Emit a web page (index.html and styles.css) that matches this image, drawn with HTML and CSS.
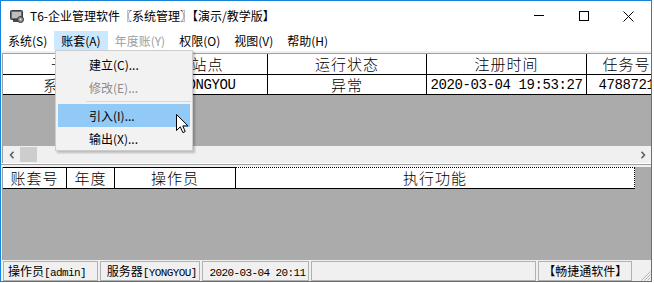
FILE: index.html
```html
<!DOCTYPE html>
<html lang="zh-CN">
<head>
<meta charset="utf-8">
<title>T6-企业管理软件</title>
<link rel="stylesheet" href="styles.css">
</head>
<body>
<div class="window">
  <div class="titlebar">
    <svg class="app-icon" width="14" height="13" viewBox="0 0 14 13">
      <rect x="0.5" y="0.5" width="12" height="9" rx="1" fill="#6b6b6b" stroke="#3a3a3a"/>
      <rect x="2" y="2" width="9" height="6" fill="#bdbdbd"/>
      <rect x="3" y="10" width="6" height="2" fill="#4a4a4a"/>
      <circle cx="10.5" cy="9.5" r="3" fill="#8c8c8c" stroke="#333"/>
      <circle cx="10.5" cy="9.5" r="1" fill="#e6e6e6"/>
    </svg>
    <span class="title">T6-企业管理软件〖系统管理〗【演示/教学版】</span>
    <div class="controls">
      <span class="ctl"><svg width="10" height="10" viewBox="0 0 10 10"><path d="M0 4.5H10" stroke="#000" stroke-width="1"/></svg></span>
      <span class="ctl"><svg width="10" height="10" viewBox="0 0 10 10"><rect x="0.5" y="0.5" width="9" height="9" fill="none" stroke="#000"/></svg></span>
      <span class="ctl"><svg width="11" height="11" viewBox="0 0 11 11"><path d="M0.5 0.5L10.5 10.5M10.5 0.5L0.5 10.5" stroke="#000" stroke-width="1"/></svg></span>
    </div>
  </div>
  <div class="menubar">
    <span class="mi">系统(S)</span>
    <span class="mi active">账套(A)</span>
    <span class="mi disabled">年度账(Y)</span>
    <span class="mi">权限(O)</span>
    <span class="mi">视图(V)</span>
    <span class="mi">帮助(H)</span>
  </div>
  <div class="client">
    <div class="pane pane-top">
      <div class="grid g1">
        <div class="cell">子系统</div>
        <div class="cell">站点</div>
        <div class="cell">运行状态</div>
        <div class="cell">注册时间</div>
        <div class="cell">任务号</div>
        <div class="cell"></div>
        <div class="cell row2">系统管理</div>
        <div class="cell row2"><span class="mono">YONGYOU</span></div>
        <div class="cell row2">异常</div>
        <div class="cell row2"><span class="mono">2020-03-04 19:53:27</span></div>
        <div class="cell row2"><span class="mono">4788721</span></div>
        <div class="cell row2"></div>
      </div>
      <div class="fill"></div>
      <div class="hscroll">
        <span class="sb-btn"><svg width="6" height="8" viewBox="0 0 6 8"><path d="M4.5 0.8L1.5 4L4.5 7.2" fill="none" stroke="#606060" stroke-width="1.6"/></svg></span>
        <span class="thumb"></span>
        <span class="track"></span>
        <span class="sb-btn"><svg width="6" height="8" viewBox="0 0 6 8"><path d="M1.5 0.8L4.5 4L1.5 7.2" fill="none" stroke="#606060" stroke-width="1.6"/></svg></span>
      </div>
    </div>
    <div class="splitter"></div>
    <div class="pane pane-bottom">
      <div class="grid g2">
        <div class="cell">账套号</div>
        <div class="cell">年度</div>
        <div class="cell">操作员</div>
        <div class="cell focus">执行功能</div>
      </div>
      <div class="fill"></div>
    </div>
    <div class="statusbar">
      <span class="panel p1">操作员<span class="mono-s">[admin]</span></span>
      <span class="panel p2">服务器<span class="mono-s">[YONGYOU]</span></span>
      <span class="panel p3"><span class="mono-s">2020-03-04 20:11</span></span>
      <span class="panel p4"></span>
      <span class="panel p5">【畅捷通软件】</span>
      <svg class="grip" width="11" height="11" viewBox="0 0 11 11">
        <path d="M10.5 1.5L1.5 10.5M10.5 4.5L4.5 10.5M10.5 7.5L7.5 10.5" stroke="#b4b4b4" stroke-width="1"/>
      </svg>
    </div>
  </div>

  <div class="dropdown">
    <div class="item">建立(C)...</div>
    <div class="item disabled">修改(E)...</div>
    <div class="sep"></div>
    <div class="item hover">引入(I)...</div>
    <div class="item">输出(X)...</div>
  </div>
  <svg class="cursor" width="13" height="20" viewBox="0 0 13 20">
    <path d="M0.5 0.5L0.5 16.5L4.3 12.8L6.8 18.6L9.2 17.6L6.8 11.9L12 11.9Z" fill="#fff" stroke="#000" stroke-width="1" stroke-linejoin="miter"/>
  </svg>
</div>
</body>
</html>
```

FILE: styles.css
```css
* {
  box-sizing: border-box;
  margin: 0;
  padding: 0;
}

html, body {
  margin: 0;
  background: #ffffff;
  width: 654px;
  height: 283px;
  overflow: hidden;
  font-family: "Noto Sans CJK SC", "Noto Sans", sans-serif;
  color: #000;
}

.window {
  position: relative;
  width: 652px;
  height: 282px;
  border: 1px solid #1883d7;
  background: #ffffff;
  overflow: hidden;
}

/* ---------- title bar ---------- */
.titlebar {
  height: 30px;
  display: flex;
  align-items: center;
}

.app-icon {
  flex: none;
  margin-left: 9px;
}

.title {
  margin-left: 6px;
  font-size: 12px;
  line-height: 16px;
  white-space: nowrap;
}

.controls {
  margin-left: auto;
  display: flex;
  height: 30px;
}

.ctl {
  width: 45px;
  height: 30px;
  display: flex;
  align-items: center;
  justify-content: center;
}

/* ---------- menu bar ---------- */
.menubar {
  height: 20px;
  display: flex;
  align-items: flex-start;
}

.mi {
  height: 19px;
  line-height: 19px;
  padding: 0 7px;
  font-size: 12px;
  white-space: nowrap;
}

.mi.active {
  background: #cce8ff;
}

.mi.disabled {
  color: #a0a0a0;
}

/* ---------- client area ---------- */
.client {
  height: 230px;
  background: #f0f0f0;
  padding-top: 2px;
  display: flex;
  flex-direction: column;
}

.pane {
  margin-left: 1px;
  background: #ababab;
  border-left: 1px solid #a0a0a0;
  display: flex;
  flex-direction: column;
  overflow: hidden;
}

.pane-top {
  height: 110px;
  border-top: 1px solid #a0a0a0;
}

.pane-bottom {
  height: 93px;
  margin-top: 2px;
}

.fill {
  flex: 1;
  background: #ababab;
}

.grid {
  display: grid;
  width: max-content;
  flex: none;
  font-size: 15px;
  font-weight: 300;
  letter-spacing: 1px;
}

.g1 {
  grid-template-columns: 145px 120px 159px 160px 80px 200px;
}

.g2 {
  grid-template-columns: 64px 48px 121px 399px;
}

.cell {
  height: 21px;
  background: #ffffff;
  border-right: 1px solid #000;
  border-bottom: 1px solid #000;
  display: flex;
  align-items: center;
  justify-content: center;
  white-space: nowrap;
  overflow: hidden;
  line-height: 20px;
}

.g1 .row2 {
  height: 20px;
}

.g2 .cell {
  height: 22px;
  border-top: 1px solid #000;
}

.g2 .focus {
  border-top: 1px dotted #000;
  border-right: 1px dotted #000;
}

.mono {
  font-family: "Liberation Mono", "DejaVu Sans Mono", monospace;
  font-size: 14px;
  letter-spacing: -0.4px;
  font-weight: normal;
}

.hscroll {
  height: 17px;
  flex: none;
  display: flex;
  background: #f0f0f0;
}

.sb-btn {
  width: 17px;
  height: 17px;
  display: flex;
  align-items: center;
  justify-content: center;
  flex: none;
}

.thumb {
  width: 17px;
  height: 15px;
  margin-top: 1px;
  background: #cdcdcd;
  flex: none;
}

.track {
  flex: 1;
}

.splitter {
  height: 2px;
  flex: none;
  border-top: 1px solid #ffffff;
  border-bottom: 1px solid #a0a0a0;
}

/* ---------- status bar ---------- */
.statusbar {
  height: 20px;
  margin-top: 1px;
  padding-left: 2px;
  display: flex;
  gap: 2px;
  flex: none;
}

.panel {
  height: 20px;
  border: 1px solid #b0b0b0;
  font-size: 12px;
  line-height: 18px;
  white-space: nowrap;
  overflow: hidden;
  padding-left: 6px;
}

.p1 { width: 95px; padding-left: 4px; }
.p2 { width: 101px; }
.p3 { width: 107px; }
.p4 { width: 226px; }
.p5 { width: 94px; padding-left: 0; text-align: center; }

.mono-s {
  font-family: "Liberation Mono", "DejaVu Sans Mono", monospace;
  font-size: 11px;
  letter-spacing: -0.6px;
}

.grip {
  margin-left: 6px;
  align-self: flex-end;
}

/* ---------- dropdown menu ---------- */
.dropdown {
  position: absolute;
  left: 54px;
  top: 49px;
  width: 138px;
  background: #f2f2f2;
  border: 1px solid #cccccc;
  padding: 2px 2px 0 2px;
  box-shadow: 2px 2px 2px rgba(0, 0, 0, 0.22);
}

.item {
  height: 23px;
  line-height: 23px;
  padding-left: 31px;
  font-size: 12px;
  white-space: nowrap;
}

.item.disabled {
  color: #8d8d8d;
}

.item.hover {
  background: #91c9f7;
}

.sep {
  height: 1px;
  margin: 2px -1px 2px 28px;
  background: #d7d7d7;
}

.cursor {
  position: absolute;
  left: 175px;
  top: 113px;
}
```
